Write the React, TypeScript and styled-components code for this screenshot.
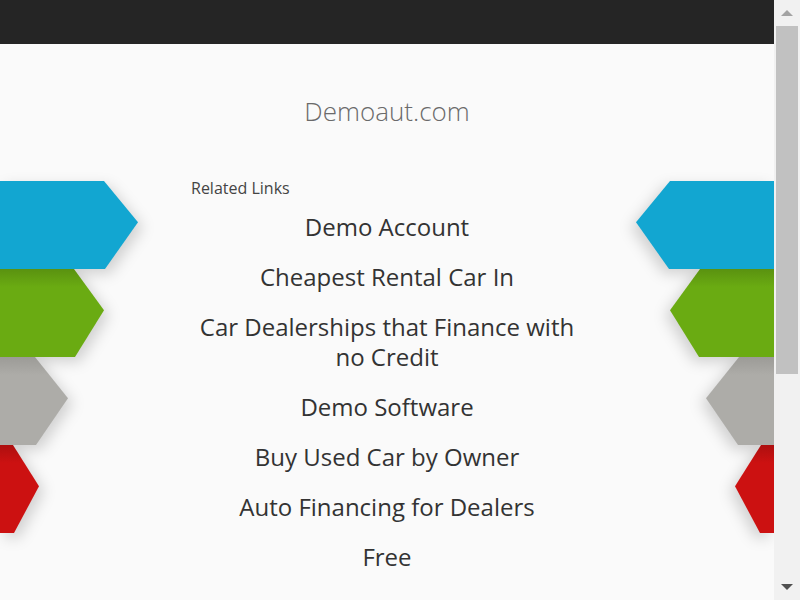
import React from "react";
import styled, { createGlobalStyle, css } from "styled-components";

const GlobalStyle = createGlobalStyle`
  html, body { margin: 0; padding: 0; }
  body {
    background: #fafafa;
    font-family: "Open Sans", "Liberation Sans", sans-serif;
    color: #333;
    overflow: hidden;
  }
`;

const Page = styled.div`
  min-height: 945px;
  margin-right: 26px;
  display: flex;
  flex-direction: column;
`;

const TopBar = styled.header`
  height: 44px;
  background: #252525;
  flex-shrink: 0;
`;

const Title = styled.h1`
  margin: 52px 0 0;
  text-align: center;
  font-family: "Open Sans", "Liberation Sans", sans-serif;
  font-weight: 300;
  font-size: 26px;
  line-height: 30px;
  color: #6a6a6a;
`;

const ContentRow = styled.main`
  margin-top: 52px;
  display: flex;
  align-items: flex-start;
`;

const ArrowColumn = styled.div<{ $side: "left" | "right" }>`
  flex: 1;
  padding-top: 3px;
  display: flex;
  flex-direction: column;
  align-items: ${(p) => (p.$side === "left" ? "flex-start" : "flex-end")};
  filter: drop-shadow(${(p) => (p.$side === "left" ? "5px" : "-5px")} 5px 7px rgba(0, 0, 0, 0.16));
`;

const Arrow = styled.div<{
  $side: "left" | "right";
  $width: number;
  $tip: number;
  $color: string;
  $shade?: string;
}>`
  width: ${(p) => p.$width}px;
  height: 88px;
  background: ${(p) =>
    p.$shade
      ? `linear-gradient(to bottom, ${p.$shade} 0px, ${p.$color} 18px, ${p.$color} 100%)`
      : p.$color};
  ${(p) =>
    p.$side === "left"
      ? css`
          clip-path: polygon(
            0 0,
            ${p.$width - p.$tip}px 0,
            100% 47%,
            ${p.$width - p.$tip + 1}px 100%,
            0 100%
          );
        `
      : css`
          clip-path: polygon(
            ${p.$tip}px 0,
            100% 0,
            100% 100%,
            ${p.$tip - 1}px 100%,
            0 47%
          );
        `}
`;

const Center = styled.section`
  width: 392px;
  flex-shrink: 0;
`;

const RelatedLabel = styled.div`
  font-size: 16px;
  line-height: 20px;
  color: #444;
`;

const LinkList = styled.ul`
  list-style: none;
  margin: 14px 0 0;
  padding: 0;
  display: flex;
  flex-direction: column;
  gap: 20px;
`;

const LinkItem = styled.li`
  text-align: center;
  font-size: 24px;
  line-height: 30px;
  color: #333;
`;

/* Scrollbar drawn over the page's right edge, as the reference shows one */
const ScrollTrack = styled.div`
  position: fixed;
  top: 0;
  right: 0;
  width: 26px;
  height: 100vh;
  background: #f1f1f1;
  display: flex;
  flex-direction: column;
`;

const ScrollButton = styled.div<{ $dir: "up" | "down"; $color: string }>`
  height: 26px;
  flex-shrink: 0;
  display: flex;
  align-items: center;
  justify-content: center;
  &::before {
    content: "";
    width: 0;
    height: 0;
    border-left: 6px solid transparent;
    border-right: 6px solid transparent;
    ${(p) =>
      p.$dir === "up"
        ? css`border-bottom: 6px solid ${p.$color};`
        : css`border-top: 6px solid ${p.$color};`}
  }
`;

const ScrollArea = styled.div`
  flex: 1;
  padding: 0 2px;
`;

const ScrollThumb = styled.div`
  height: 348px;
  background: #c1c1c1;
`;

const arrows = [
  { width: 138, tip: 34, color: "#12a6d1" },
  { width: 104, tip: 30, color: "#6aab12", shade: "#5a9210" },
  { width: 68, tip: 33, color: "#adaca8", shade: "#9c9b97" },
  { width: 39, tip: 26, color: "#cc1111", shade: "#ad0f0f" },
];

const links = [
  "Demo Account",
  "Cheapest Rental Car In",
  "Car Dealerships that Finance with no Credit",
  "Demo Software",
  "Buy Used Car by Owner",
  "Auto Financing for Dealers",
  "Free",
];

export default function App() {
  return (
    <>
      <GlobalStyle />
      <Page>
        <TopBar />
        <Title>Demoaut.com</Title>
        <ContentRow>
          <ArrowColumn $side="left">
            {arrows.map((a, i) => (
              <Arrow key={i} $side="left" $width={a.width} $tip={a.tip} $color={a.color} $shade={a.shade} />
            ))}
          </ArrowColumn>
          <Center>
            <RelatedLabel>Related Links</RelatedLabel>
            <LinkList>
              {links.map((l) => (
                <LinkItem key={l}>{l}</LinkItem>
              ))}
            </LinkList>
          </Center>
          <ArrowColumn $side="right">
            {arrows.map((a, i) => (
              <Arrow key={i} $side="right" $width={a.width} $tip={a.tip} $color={a.color} $shade={a.shade} />
            ))}
          </ArrowColumn>
        </ContentRow>
      </Page>
      <ScrollTrack>
        <ScrollButton $dir="up" $color="#a3a3a3" />
        <ScrollArea>
          <ScrollThumb />
        </ScrollArea>
        <ScrollButton $dir="down" $color="#505050" />
      </ScrollTrack>
    </>
  );
}
